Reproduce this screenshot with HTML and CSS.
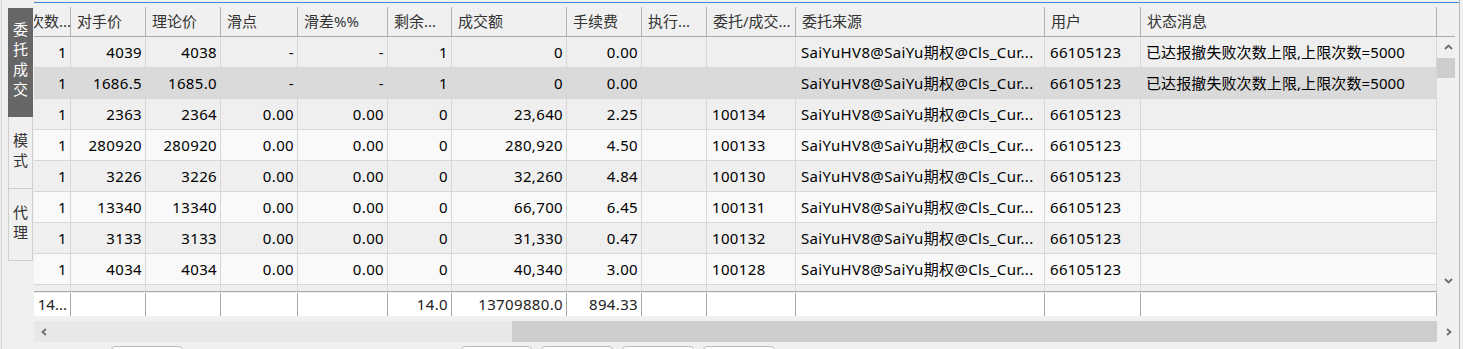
FILE: index.html
```html
<!DOCTYPE html>
<html lang="zh-CN">
<head>
  <meta charset="UTF-8">
  <title>委托成交</title>
  <link rel="stylesheet" href="styles.css">
</head>
<body>
  <div class="frame">
    <!-- 左侧竖排标签 -->
    <div class="side">
      <div class="tab active">委托成交</div>
      <div class="tab">模式</div>
      <div class="tab">代理</div>
    </div>

    <div class="main">
      <div class="topline"></div>

      <div class="grid-row">
        <div class="grid">
          <div class="tbl">
            <div class="hdr">
              <div>次数...</div><div>对手价</div><div>理论价</div><div>滑点</div><div>滑差%%</div>
              <div>剩余...</div><div>成交额</div><div>手续费</div><div>执行...</div><div>委托/成交...</div>
              <div>委托来源</div><div>用户</div><div>状态消息</div>
            </div>

            <div class="row">
              <div>1</div><div>4039</div><div>4038</div><div>-</div><div>-</div>
              <div>1</div><div>0</div><div>0.00</div><div></div><div class="l"></div>
              <div class="l">SaiYuHV8@SaiYu期权@Cls_Cur...</div><div class="l">66105123</div><div class="l msg">已达报撤失败次数上限,上限次数=5000</div>
            </div>
            <div class="row sel">
              <div>1</div><div>1686.5</div><div>1685.0</div><div>-</div><div>-</div>
              <div>1</div><div>0</div><div>0.00</div><div></div><div class="l"></div>
              <div class="l">SaiYuHV8@SaiYu期权@Cls_Cur...</div><div class="l">66105123</div><div class="l msg">已达报撤失败次数上限,上限次数=5000</div>
            </div>
            <div class="row">
              <div>1</div><div>2363</div><div>2364</div><div>0.00</div><div>0.00</div>
              <div>0</div><div>23,640</div><div>2.25</div><div></div><div class="l">100134</div>
              <div class="l">SaiYuHV8@SaiYu期权@Cls_Cur...</div><div class="l">66105123</div><div class="l"></div>
            </div>
            <div class="row">
              <div>1</div><div>280920</div><div>280920</div><div>0.00</div><div>0.00</div>
              <div>0</div><div>280,920</div><div>4.50</div><div></div><div class="l">100133</div>
              <div class="l">SaiYuHV8@SaiYu期权@Cls_Cur...</div><div class="l">66105123</div><div class="l"></div>
            </div>
            <div class="row">
              <div>1</div><div>3226</div><div>3226</div><div>0.00</div><div>0.00</div>
              <div>0</div><div>32,260</div><div>4.84</div><div></div><div class="l">100130</div>
              <div class="l">SaiYuHV8@SaiYu期权@Cls_Cur...</div><div class="l">66105123</div><div class="l"></div>
            </div>
            <div class="row">
              <div>1</div><div>13340</div><div>13340</div><div>0.00</div><div>0.00</div>
              <div>0</div><div>66,700</div><div>6.45</div><div></div><div class="l">100131</div>
              <div class="l">SaiYuHV8@SaiYu期权@Cls_Cur...</div><div class="l">66105123</div><div class="l"></div>
            </div>
            <div class="row">
              <div>1</div><div>3133</div><div>3133</div><div>0.00</div><div>0.00</div>
              <div>0</div><div>31,330</div><div>0.47</div><div></div><div class="l">100132</div>
              <div class="l">SaiYuHV8@SaiYu期权@Cls_Cur...</div><div class="l">66105123</div><div class="l"></div>
            </div>
            <div class="row">
              <div>1</div><div>4034</div><div>4034</div><div>0.00</div><div>0.00</div>
              <div>0</div><div>40,340</div><div>3.00</div><div></div><div class="l">100128</div>
              <div class="l">SaiYuHV8@SaiYu期权@Cls_Cur...</div><div class="l">66105123</div><div class="l"></div>
            </div>
            <div class="row">
              <div></div><div></div><div></div><div></div><div></div><div></div><div></div>
              <div></div><div></div><div></div><div></div><div></div><div></div>
            </div>
          </div>
        </div>

        <!-- 竖向滚动条 -->
        <div class="vcol">
          <div class="vhead"></div>
          <div class="vbar">
            <div class="arrow up">
              <svg width="9" height="6" viewBox="0 0 9 6"><polyline points="1,5 4.5,1.5 8,5" fill="none" stroke="#6e6e6e" stroke-width="1.8"/></svg>
            </div>
            <div class="vthumb"></div>
            <div class="vspace"></div>
            <div class="arrow down">
              <svg width="9" height="6" viewBox="0 0 9 6"><polyline points="1,1 4.5,4.5 8,1" fill="none" stroke="#6e6e6e" stroke-width="1.8"/></svg>
            </div>
          </div>
        </div>
      </div>

      <!-- 合计行 -->
      <div class="sum">
        <div class="sumgrid">
          <div class="tbl">
            <div class="sumrow">
              <div></div><div></div><div></div><div></div><div></div>
              <div>14.0</div><div>13709880.0</div><div>894.33</div><div></div><div></div>
              <div></div><div></div><div></div>
            </div>
          </div>
          <div class="first">14...</div>
        </div>
      </div>

      <!-- 横向滚动条 -->
      <div class="hbar">
        <div class="htrack">
          <svg width="6" height="8" viewBox="0 0 6 8"><polyline points="5,1 1.5,4 5,7" fill="none" stroke="#6e6e6e" stroke-width="1.8"/></svg>
        </div>
        <div class="hthumb"></div>
        <div class="hright">
          <svg width="6" height="8" viewBox="0 0 6 8"><polyline points="1,1 4.5,4 1,7" fill="none" stroke="#6e6e6e" stroke-width="1.8"/></svg>
        </div>
      </div>

      <div class="btns">
        <button class="b1"></button>
        <button class="b2"></button>
        <button></button>
        <button></button>
        <button></button>
      </div>
    </div>
  </div>
</body>
</html>
```

FILE: styles.css
```css
* {
  box-sizing: border-box;
}
body {
  margin: 0;
  width: 1463px;
  height: 349px;
  overflow: hidden;
  background: #f0f0f0;
  font-family: "Noto Sans", "Noto Sans CJK SC", sans-serif;
  font-size: 15px;
  color: #000;
}
.frame {
  display: flex;
  height: 349px;
  margin-left: 1px;
  border-left: 1px solid #d4d4d4;
}
/* 左侧标签 */
.side {
  width: 32px;
  padding: 8px 1px 0 6px;
  flex: none;
}
.tab {
  writing-mode: vertical-rl;
  letter-spacing: 5px;
  width: 25px;
  height: 72px;
  line-height: 25px;
  text-align: center;
  color: #333;
  border: 1px solid #cfcfcf;
  border-top: none;
}
.tab.active {
  height: 109px;
  background: #666;
  color: #fff;
  border-color: #666;
}
/* 主区域 */
.main {
  width: 1426px;
  flex: none;
  border-right: 1px solid #b9b9b9;
}
.topline {
  height: 1px;
  margin: 2px 0 4px;
  background: #3a87d4;
}
.grid-row {
  display: flex;
  height: 284px;
}
.grid {
  width: 1403px;
  overflow: hidden;
}
.tbl {
  width: 1414px;
  margin-left: -11px;
}
.hdr,
.row,
.sumrow {
  display: grid;
  grid-template-columns: 48px 75px 75px 77px 90px 64px 115px 75px 65px 89px 249px 96px 296px;
}
.hdr {
  height: 30px;
  border-bottom: 1px solid #a9a9a9;
}
.hdr div {
  padding-left: 6px;
  line-height: 29px;
  color: #333;
  white-space: nowrap;
  overflow: hidden;
  border-right: 1px solid #b4b4b4;
}
.row {
  height: 31px;
  background: #efefef;
  border-bottom: 1px solid #d7d7d7;
}
.row:nth-child(odd) {
  background: #f9f9f9;
}
.row.sel {
  background: #dadada;
}
.row div {
  padding: 0 3px;
  line-height: 30px;
  text-align: right;
  letter-spacing: 0.35px;
  white-space: nowrap;
  overflow: hidden;
  border-right: 1px solid #d7d7d7;
}
.row div.l {
  text-align: left;
  padding-left: 5px;
}
.row div.msg {
  letter-spacing: 0.1px;
}
/* 竖向滚动条 */
.vcol {
  width: 18px;
  flex: none;
}
.vhead {
  height: 30px;
  border-bottom: 1px solid #a9a9a9;
}
.vbar {
  height: 254px;
  display: flex;
  flex-direction: column;
}
.arrow {
  height: 20px;
  display: flex;
  justify-content: center;
  align-items: center;
  padding-left: 5px;
}
.arrow.down {
  height: 17px;
  padding-bottom: 4px;
}
.vthumb {
  height: 20px;
  margin-top: 1px;
  background: #cdcdcd;
}
.vspace {
  flex: 1;
}
/* 合计行 */
.sum {
  width: 1403px;
  border-top: 1px solid #a9a9a9;
  padding-top: 1px;
}
.sumgrid {
  position: relative;
  overflow: hidden;
}
.sumrow {
  height: 23px;
}
.sumrow div {
  background: #fff;
  border-right: 1px solid #a9a9a9;
  padding: 0 3px;
  line-height: 23px;
  text-align: right;
  letter-spacing: 0.35px;
  color: #222;
}
.first {
  position: absolute;
  left: 0;
  top: 0;
  width: 36px;
  padding-right: 3px;
  line-height: 23px;
  text-align: right;
  color: #222;
  background: #fff;
}
/* 横向滚动条 */
.hbar {
  display: flex;
  height: 21px;
  margin-top: 5px;
  width: 1421px;
}
.htrack {
  width: 478px;
  background: #e8e8e8;
  display: flex;
  align-items: center;
  padding-left: 7px;
}
.hthumb {
  width: 925px;
  background: #cdcdcd;
}
.hright {
  width: 18px;
  display: flex;
  align-items: center;
  padding-left: 9px;
}
/* 底部按钮 */
.btns {
  display: flex;
  margin-top: 4px;
  padding-left: 77px;
}
.btns button {
  width: 72px;
  height: 26px;
  margin-right: 9px;
  background: #fdfdfd;
  border: 1px solid #bcbcbc;
  border-radius: 4px;
}
.btns .b1 {
  margin-right: 278px;
}
.btns .b2 {
  width: 71px;
}
```
